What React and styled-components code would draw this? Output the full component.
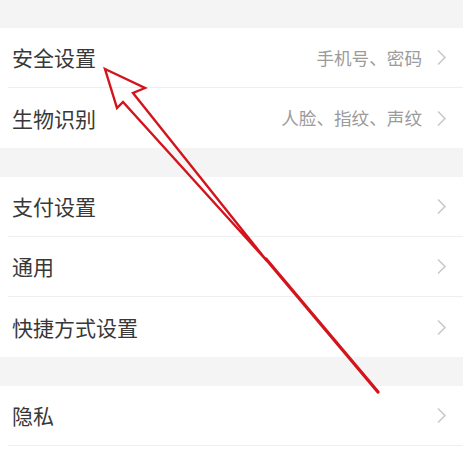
import React from "react";
import styled, { createGlobalStyle } from "styled-components";

const GlobalStyle = createGlobalStyle`
  html, body {
    margin: 0;
    padding: 0;
    background: #ffffff;
  }
  body {
    font-family: "Noto Sans CJK SC", "Noto Sans", sans-serif;
  }
`;

const groups = [
  [
    { title: "安全设置", hint: "手机号、密码" },
    { title: "生物识别", hint: "人脸、指纹、声纹" },
  ],
  [{ title: "支付设置" }, { title: "通用" }, { title: "快捷方式设置" }],
  [{ title: "隐私" }],
];

const Page = styled.div`
  position: relative;
  width: 463px;
  height: 453px;
  overflow: hidden;
  background: #ffffff;
`;

const Band = styled.div`
  height: ${(p) => p.$h}px;
  background: #f4f4f4;
`;

const Group = styled.div`
  background: #ffffff;
`;

const Row = styled.div`
  height: 60px;
  padding-left: 8px;
`;

const RowInner = styled.div`
  height: 100%;
  box-sizing: border-box;
  display: flex;
  align-items: center;
  padding: 0 16px 0 4px;
  border-bottom: ${(p) => (p.$divider ? "1px solid #efefef" : "none")};
`;

const Title = styled.span`
  flex: 1;
  font-size: 21px;
  color: #383838;
  line-height: 1;
`;

const Hint = styled.span`
  font-size: 17.6px;
  color: #9b9b9b;
  line-height: 1;
  margin-right: 14px;
`;

const Chevron = () => (
  <svg width="11" height="17" viewBox="0 0 11 17">
    <polyline
      points="2,1.5 9,8.5 2,15.5"
      fill="none"
      stroke="#c9c9c9"
      strokeWidth="1.6"
    />
  </svg>
);

const Overlay = styled.svg`
  position: absolute;
  left: 0;
  top: 0;
  pointer-events: none;
`;

// red annotation arrow drawn over the list
const Arrow = () => (
  <Overlay width="463" height="453" viewBox="0 0 463 453">
    <g fill="none" stroke="#d3141c" strokeLinecap="round">
      <path
        d="M105 69 L145 88 L133 93 L267 261 L123 102 L117 108 Z"
        strokeWidth="2.4"
        strokeLinejoin="miter"
      />
      <path d="M266 259 L378 392" strokeWidth="3.4" />
    </g>
  </Overlay>
);

export default function App() {
  const bands = [28, 29, 29];
  return (
    <Page>
      <GlobalStyle />
      {groups.map((items, gi) => (
        <React.Fragment key={gi}>
          <Band $h={bands[gi]} />
          <Group>
            {items.map((item, i) => (
              <Row key={item.title}>
                <RowInner
                  $divider={i < items.length - 1 || gi === groups.length - 1}
                >
                  <Title>{item.title}</Title>
                  {item.hint && <Hint>{item.hint}</Hint>}
                  <Chevron />
                </RowInner>
              </Row>
            ))}
          </Group>
        </React.Fragment>
      ))}
      <Arrow />
    </Page>
  );
}
